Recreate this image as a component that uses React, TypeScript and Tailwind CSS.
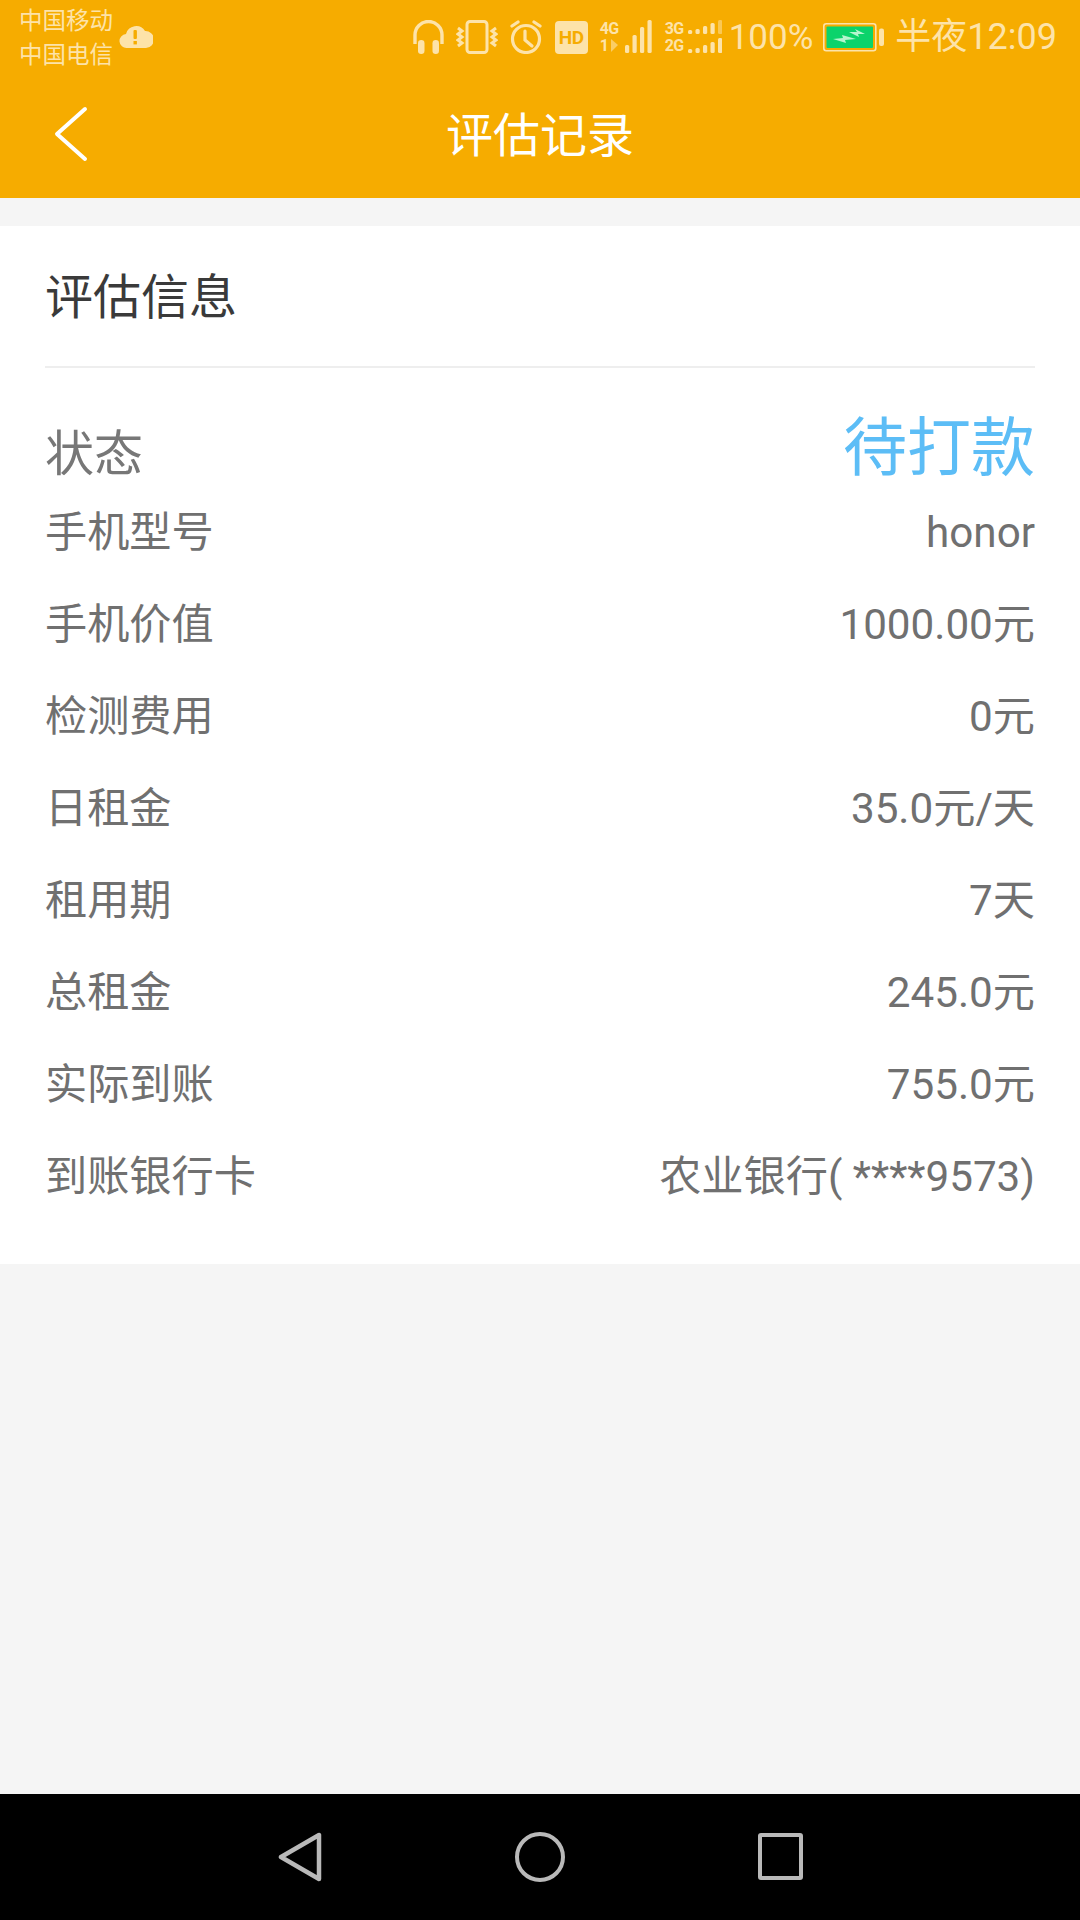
const rows = [
  ['手机型号', 'honor'],
  ['手机价值', '1000.00元'],
  ['检测费用', '0元'],
  ['日租金', '35.0元/天'],
  ['租用期', '7天'],
  ['总租金', '245.0元'],
  ['实际到账', '755.0元'],
  ['到账银行卡', '农业银行( ****9573)'],
]

const ink = '#fde3a9'

function Headphones() {
  return (
    <svg width="31" height="34" viewBox="0 0 31 34" fill="none">
      <path d="M2 24V15a13.500 13.500 0 0 1 27 0v9" stroke={ink} strokeWidth="3.400" />
      <rect x="5" y="20" width="6.500" height="14" rx="3.200" fill={ink} />
      <rect x="19.500" y="20" width="6.500" height="14" rx="3.200" fill={ink} />
    </svg>
  )
}

function Vibrate() {
  return (
    <svg width="42" height="34" viewBox="0 0 42 34" fill="none" stroke={ink} strokeWidth="3">
      <rect x="11" y="1.500" width="20" height="31" rx="3" />
      <path d="M2 8l4 3-4 3 4 3-4 3 4 3-4 3" />
      <path d="M40 8l-4 3 4 3-4 3 4 3-4 3 4 3" />
    </svg>
  )
}

function Alarm() {
  return (
    <svg width="32" height="34" viewBox="0 0 32 34" fill="none" stroke={ink} strokeWidth="3.200" strokeLinecap="round">
      <circle cx="16" cy="19" r="13.500" />
      <path d="M15 11v9l7 6" />
      <path d="M2 6l6-4M30 6l-6-4" />
    </svg>
  )
}

function Hd() {
  return (
    <div className="w-[33px] h-[33px] rounded-[4px] bg-[#fde3a9] flex items-center justify-center text-[19px] leading-none font-bold tracking-[-0.5px] text-[#f6ac00]">
      HD
    </div>
  )
}

function Bars({ heights, x, y, dimLast }: { heights: number[]; x: number; y: number; dimLast?: boolean }) {
  return (
    <>
      {heights.map((h, i) => (
        <rect
          key={i}
          x={x + i * 7.500}
          y={y - h}
          width="4.200"
          height={h}
          rx="1.500"
          fill={ink}
          opacity={dimLast && i === heights.length - 1 ? 0.5 : 1}
        />
      ))}
    </>
  )
}

function SignalOne() {
  return (
    <div className="w-[54px] h-[34px] flex">
      <div className="w-[24px] text-[16px] leading-[17px] font-bold tracking-[-0.5px]">
        <div>4G</div>
        <div className="flex items-center">
          <span>1</span>
          <svg className="ml-[3px]" width="7" height="13" viewBox="0 0 7 13">
            <path d="M0 0v13l7-7z" fill={ink} opacity="0.6" />
          </svg>
        </div>
      </div>
      <svg width="30" height="34" viewBox="0 0 30 34">
        <Bars heights={[8, 18, 26, 33]} x={1} y={33} />
      </svg>
    </div>
  )
}

function SignalTwo() {
  return (
    <div className="w-[57px] h-[34px] flex">
      <div className="w-[23px] text-[16px] leading-[17px] font-bold tracking-[-0.5px]">
        <div>3G</div>
        <div>2G</div>
      </div>
      <svg width="34" height="34" viewBox="0 0 34 34">
        <Bars heights={[4, 5, 8, 11, 14]} x={0} y={14} dimLast />
        <Bars heights={[4, 5, 8, 11, 15]} x={0} y={33} />
      </svg>
    </div>
  )
}

function Battery() {
  return (
    <svg width="62" height="29" viewBox="0 0 62 29">
      <rect x="0.800" y="0.800" width="52" height="27" rx="2.500" fill="none" stroke={ink} strokeWidth="1.600" />
      <rect x="3.500" y="3.500" width="46.500" height="21.500" rx="1" fill="#0bd36b" />
      <rect x="56" y="5.500" width="5" height="17.500" rx="2" fill={ink} />
      <path d="M10 16l10-1-1-3 14 4-11 1 1 3z" fill="#b6f5cf" />
      <path d="M26 9l8 0-2-3 10 5-7 0 1 3z" fill="#b6f5cf" />
    </svg>
  )
}

function StatusBar() {
  return (
    <div className="h-[74px] flex items-start justify-between pl-[19px] pr-[23px]">
      <div className="flex items-start">
        <div className="pt-[4px] text-[23.500px] leading-[34px] text-[#fde3a9]">
          <div>中国移动</div>
          <div>中国电信</div>
        </div>
        <svg className="ml-[6px] mt-[25px]" width="34" height="24" viewBox="0 0 34 24">
          <path d="M8 23a7 7 0 0 1-1-14 10.500 10.500 0 0 1 19-3 8.500 8.500 0 0 1 1 17z" fill="#fde3a9" />
          <rect x="14.500" y="5" width="3.400" height="9" rx="1" fill="#f6ac00" />
          <rect x="14.500" y="16" width="3.400" height="3.400" fill="#f6ac00" />
        </svg>
      </div>
      <div className="flex items-center pt-[4px] h-[70px] text-[#fde3a9]">
        <Headphones />
        <div className="ml-[12px]"><Vibrate /></div>
        <div className="ml-[12px]"><Alarm /></div>
        <div className="ml-[13px]"><Hd /></div>
        <div className="ml-[12px]"><SignalOne /></div>
        <div className="ml-[11px]"><SignalTwo /></div>
        <span className="ml-[7px] text-[35px] leading-none">100%</span>
        <div className="ml-[10px]"><Battery /></div>
        <span className="ml-[10px] text-[36px] leading-none">半夜12:09</span>
      </div>
    </div>
  )
}

function Header() {
  return (
    <div className="h-[124px] pb-[2px] grid grid-cols-[1fr_auto_1fr] items-center">
      <svg className="ml-[54px] mb-[2px]" width="34" height="56" viewBox="0 0 34 56" fill="none">
        <path d="M31 3L3 28l28 25" stroke="#fff" strokeWidth="4" strokeLinecap="round" strokeLinejoin="round" />
      </svg>
      <h1 className="text-[47px] leading-none text-white">评估记录</h1>
      <div />
    </div>
  )
}

export default function App() {
  return (
    <div className="w-[1080px] h-[1920px] flex flex-col bg-[#f5f5f5] font-['Roboto','Noto_Sans_CJK_SC',sans-serif]">
      <div className="bg-[#f6ac00]">
        <StatusBar />
        <Header />
      </div>

      <div className="mt-[28px] h-[1038px] bg-white px-[45px]">
        <div className="h-[142px] pt-[4px] flex items-center border-b-[2px] border-[#eeeeee] text-[48px] leading-none text-[#3a3a3a]">
          评估信息
        </div>
        <div className="h-[119px] pb-[6px] flex items-end justify-between text-[#777777]">
          <span className="mb-[2px] text-[49px] leading-none">状态</span>
          <span className="text-[64px] leading-none text-[#5cbdf6]">待打款</span>
        </div>
        {rows.map(([label, value]) => (
          <div key={label} className="h-[92px] flex items-center justify-between text-[42.200px] leading-none text-[#707070]">
            <span>{label}</span>
            <span>{value}</span>
          </div>
        ))}
      </div>

      <div className="flex-1" />

      <div className="h-[126px] bg-black flex justify-center pt-[38px]">
        <div className="w-[240px] flex justify-center">
          <svg width="44" height="50" viewBox="0 0 44 50" fill="none">
            <path d="M41 3v44L3 25z" stroke="#b9b9b9" strokeWidth="4.500" strokeLinejoin="round" />
          </svg>
        </div>
        <div className="w-[240px] flex justify-center">
          <div className="w-[50px] h-[50px] rounded-full border-[4px] border-[#b9b9b9]" />
        </div>
        <div className="w-[240px] flex justify-center">
          <div className="w-[45px] h-[47px] mt-[1px] rounded-[3px] border-[4px] border-[#b9b9b9]" />
        </div>
      </div>
    </div>
  )
}
